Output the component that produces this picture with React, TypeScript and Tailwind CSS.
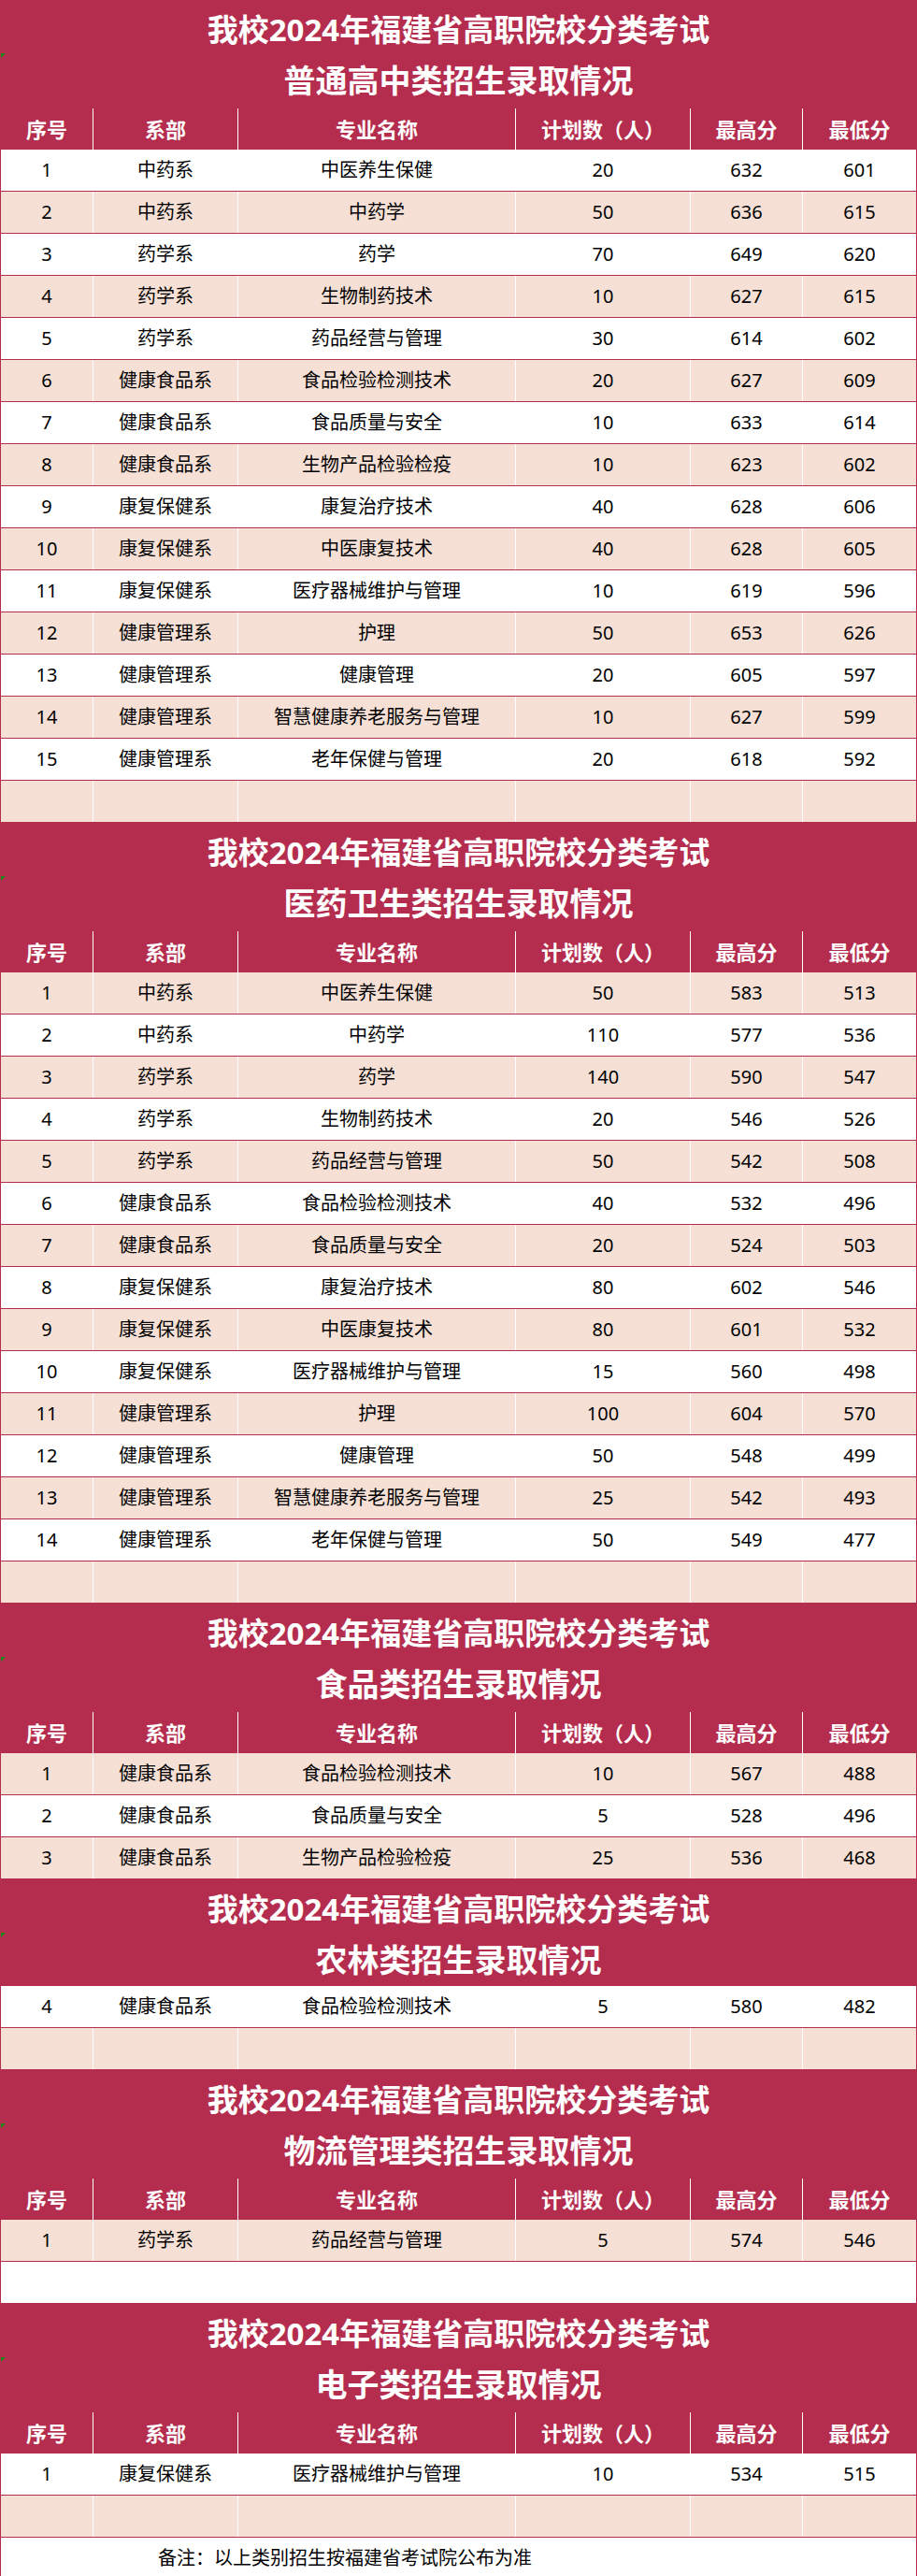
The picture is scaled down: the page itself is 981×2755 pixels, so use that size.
import React from 'react';

type Row = [string, string, string, string, string, string];

type Section = {
  subtitle: string;
  showHeader: boolean;
  startPink: boolean;
  emptyRow: boolean;
  rows: Row[];
};

const headers = ['序号', '系部', '专业名称', '计划数（人）', '最高分', '最低分'];

const sections: Section[] = [
  {
    subtitle: '普通高中类招生录取情况',
    showHeader: true,
    startPink: false,
    emptyRow: true,
    rows: [
      ['1', '中药系', '中医养生保健', '20', '632', '601'],
      ['2', '中药系', '中药学', '50', '636', '615'],
      ['3', '药学系', '药学', '70', '649', '620'],
      ['4', '药学系', '生物制药技术', '10', '627', '615'],
      ['5', '药学系', '药品经营与管理', '30', '614', '602'],
      ['6', '健康食品系', '食品检验检测技术', '20', '627', '609'],
      ['7', '健康食品系', '食品质量与安全', '10', '633', '614'],
      ['8', '健康食品系', '生物产品检验检疫', '10', '623', '602'],
      ['9', '康复保健系', '康复治疗技术', '40', '628', '606'],
      ['10', '康复保健系', '中医康复技术', '40', '628', '605'],
      ['11', '康复保健系', '医疗器械维护与管理', '10', '619', '596'],
      ['12', '健康管理系', '护理', '50', '653', '626'],
      ['13', '健康管理系', '健康管理', '20', '605', '597'],
      ['14', '健康管理系', '智慧健康养老服务与管理', '10', '627', '599'],
      ['15', '健康管理系', '老年保健与管理', '20', '618', '592'],
    ],
  },
  {
    subtitle: '医药卫生类招生录取情况',
    showHeader: true,
    startPink: true,
    emptyRow: true,
    rows: [
      ['1', '中药系', '中医养生保健', '50', '583', '513'],
      ['2', '中药系', '中药学', '110', '577', '536'],
      ['3', '药学系', '药学', '140', '590', '547'],
      ['4', '药学系', '生物制药技术', '20', '546', '526'],
      ['5', '药学系', '药品经营与管理', '50', '542', '508'],
      ['6', '健康食品系', '食品检验检测技术', '40', '532', '496'],
      ['7', '健康食品系', '食品质量与安全', '20', '524', '503'],
      ['8', '康复保健系', '康复治疗技术', '80', '602', '546'],
      ['9', '康复保健系', '中医康复技术', '80', '601', '532'],
      ['10', '康复保健系', '医疗器械维护与管理', '15', '560', '498'],
      ['11', '健康管理系', '护理', '100', '604', '570'],
      ['12', '健康管理系', '健康管理', '50', '548', '499'],
      ['13', '健康管理系', '智慧健康养老服务与管理', '25', '542', '493'],
      ['14', '健康管理系', '老年保健与管理', '50', '549', '477'],
    ],
  },
  {
    subtitle: '食品类招生录取情况',
    showHeader: true,
    startPink: true,
    emptyRow: false,
    rows: [
      ['1', '健康食品系', '食品检验检测技术', '10', '567', '488'],
      ['2', '健康食品系', '食品质量与安全', '5', '528', '496'],
      ['3', '健康食品系', '生物产品检验检疫', '25', '536', '468'],
    ],
  },
  {
    subtitle: '农林类招生录取情况',
    showHeader: false,
    startPink: false,
    emptyRow: true,
    rows: [['4', '健康食品系', '食品检验检测技术', '5', '580', '482']],
  },
  {
    subtitle: '物流管理类招生录取情况',
    showHeader: true,
    startPink: true,
    emptyRow: true,
    rows: [['1', '药学系', '药品经营与管理', '5', '574', '546']],
  },
  {
    subtitle: '电子类招生录取情况',
    showHeader: true,
    startPink: false,
    emptyRow: true,
    rows: [['1', '康复保健系', '医疗器械维护与管理', '10', '534', '515']],
  },
];

const gridCols = 'grid grid-cols-[99px_155px_297px_187px_120px_121px]';

const TitleBand = ({ subtitle }: { subtitle: string }) => (
  <div className="relative flex h-[114px] flex-col items-center bg-[#b52d4e] pt-[4px] font-bold text-white">
    {/* excel-style error marker */}
    <div className="absolute left-0 top-[57px] h-0 w-0 border-r-[5px] border-t-[5px] border-r-transparent border-t-[#1a8a1a]" />
    <div className="flex h-[54px] items-center text-[33px] leading-none">我校2024年福建省高职院校分类考试</div>
    <div className="flex h-[56px] items-center text-[34px] leading-none">{subtitle}</div>
  </div>
);

const HeaderRow = () => (
  <div className={`${gridCols} h-[46px] bg-[#b52d4e] pt-[2px]`}>
    {headers.map((h, i) => (
      <div
        key={h}
        className={`flex items-center justify-center text-[22px] font-bold text-white ${
          i < headers.length - 1 ? 'border-r border-white' : ''
        }`}
      >
        {h}
      </div>
    ))}
  </div>
);

const DataRow = ({ cells, pink }: { cells: Row | null; pink: boolean }) => (
  <div className={`${gridCols} h-[45px] border-b border-[#b52d4e] ${pink ? 'bg-[#f6e0d6]' : 'bg-white'}`}>
    {(cells ?? ['', '', '', '', '', '']).map((c, i) => (
      <div
        key={i}
        className={`flex items-center justify-center text-[20px] text-black ${i < 5 ? 'border-r border-white' : ''}`}
      >
        {c}
      </div>
    ))}
  </div>
);

const TableSection = ({ section }: { section: Section }) => {
  const isPink = (i: number) => (i % 2 === 0) === section.startPink;
  return (
    <div>
      <TitleBand subtitle={section.subtitle} />
      {section.showHeader && <HeaderRow />}
      {section.rows.map((r, i) => (
        <DataRow key={i} cells={r} pink={isPink(i)} />
      ))}
      {section.emptyRow && <DataRow cells={null} pink={isPink(section.rows.length)} />}
    </div>
  );
};

export default function App() {
  return (
    <div className="w-[981px] bg-white font-['Noto_Sans','Noto_Sans_CJK_SC',sans-serif]">
      <div className="border-x border-[#b52d4e]">
        {sections.map((s) => (
          <TableSection key={s.subtitle} section={s} />
        ))}
        <div className="flex h-[45px] items-center border-b border-[#b52d4e] bg-white pl-[168px] text-[20px] text-black">
          备注：以上类别招生按福建省考试院公布为准
        </div>
      </div>
    </div>
  );
}
